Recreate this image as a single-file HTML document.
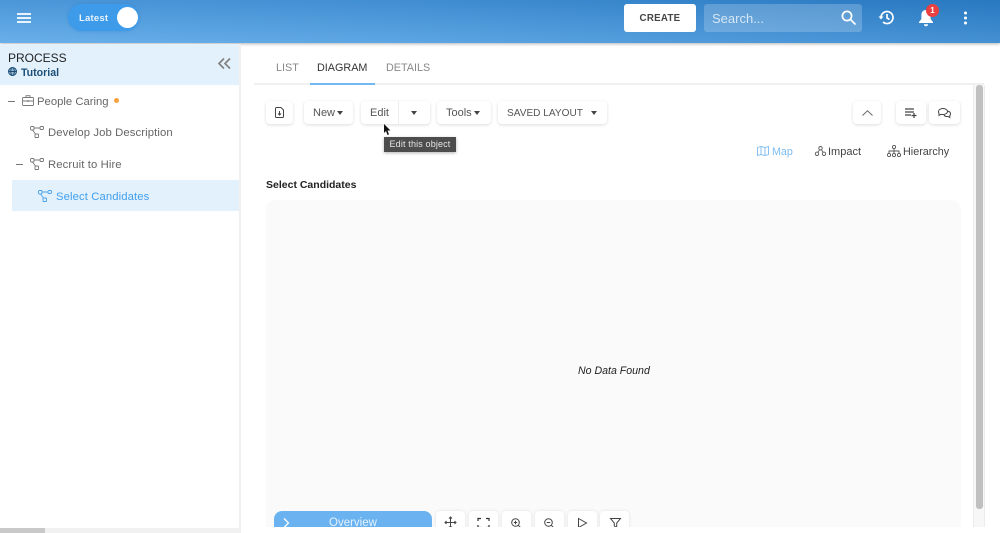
<!DOCTYPE html>
<html><head><meta charset="utf-8"><style>
*{box-sizing:border-box}
html,body{margin:0;padding:0;width:1000px;height:533px;overflow:hidden;background:#fff;font-family:"Liberation Sans",sans-serif}
.a{position:absolute;white-space:nowrap}
.btn{position:absolute;top:101px;height:23px;background:#fff;border-radius:4px;box-shadow:0 1px 3px rgba(0,0,0,.14);font-size:11px;color:#555;line-height:25px;white-space:nowrap}
.bb{position:absolute;top:511px;width:29px;height:22px;background:#fff;border-radius:4px 4px 0 0;box-shadow:0 0 3px rgba(0,0,0,.1)}
.car{position:absolute;width:0;height:0;border-left:3.5px solid transparent;border-right:3.5px solid transparent;border-top:4px solid #444}
svg{position:absolute;overflow:visible}
.t{font-size:11.3px;color:#666;letter-spacing:.1px}
.tab{font-size:10.8px;top:62px}
</style></head><body>
<!-- header -->
<div class="a" style="left:0;top:0;width:1000px;height:43px;background:linear-gradient(to right,#58a7e8 0%,#4b9ce0 40%,#2f84cd 100%);box-shadow:0 1px 3px rgba(0,0,0,.3)"></div>
<div class="a" style="left:0;top:0;width:1000px;height:43px;background:linear-gradient(to bottom,rgba(0,50,120,.14) 0%,rgba(255,255,255,.1) 100%)"></div>
<svg style="left:17px;top:13px" width="14" height="10"><path d="M0 1h14M0 5h14M0 9h14" stroke="#fff" stroke-width="1.800"/></svg>
<div class="a" style="left:68px;top:4px;width:71px;height:27px;border-radius:14px;background:#3d9bea;box-shadow:0 0 3px rgba(40,120,200,.4)"></div>
<div class="a" style="left:79px;top:13px;font-size:9.5px;font-weight:bold;color:#e8f3fc;letter-spacing:.2px">Latest</div>
<div class="a" style="left:117px;top:7px;width:21px;height:21px;border-radius:50%;background:#fff"></div>
<div class="a" style="left:624px;top:4px;width:72px;height:28px;background:#fff;border-radius:3px;text-align:center;font-size:9.7px;font-weight:bold;line-height:29px;color:#444;letter-spacing:.3px">CREATE</div>
<div class="a" style="left:704px;top:4px;width:158px;height:28px;background:rgba(255,255,255,.2);border-radius:3px;font-size:13px;line-height:29px;color:#d5e6f5;padding-left:8px">Search...</div>
<svg style="left:841px;top:10px" width="16" height="16" fill="none" stroke="#fff" stroke-width="1.7"><circle cx="6" cy="6" r="4.6"/><path d="M9.5 9.500L14.500 14.500"/></svg>
<svg style="left:878px;top:9px" width="17" height="17" fill="none" stroke="#fff" stroke-width="1.7"><path d="M3 8.500A6 6 0 1 1 5 13"/><path d="M0.500 7.500h5L3 10.500z" fill="#fff" stroke="none"/><path d="M9 5v4l2.500 1.500"/></svg>
<svg style="left:917px;top:9px" width="18" height="18"><path d="M9 1c-3 0-4.600 2.200-4.600 5v4L2 13v1h14v-1l-2.400-3V6c0-2.800-1.600-5-4.600-5z" fill="#fff"/><path d="M7 15.200h4a2 2 0 0 1-4 0z" fill="#fff"/></svg>
<div class="a" style="left:926px;top:4px;width:13px;height:13px;border-radius:50%;background:#ea4040;color:#fff;font-size:8px;font-weight:bold;text-align:center;line-height:13px">1</div>
<svg style="left:963px;top:11px" width="5" height="14" fill="#fff"><circle cx="2.500" cy="2" r="1.500"/><circle cx="2.500" cy="7" r="1.500"/><circle cx="2.500" cy="12" r="1.500"/></svg>

<!-- sidebar -->
<div class="a" style="left:0;top:44px;width:239px;height:41px;background:#e3f1fc"></div>
<div class="a" style="left:239px;top:44px;width:2px;height:489px;background:#f0f0f0"></div>
<div class="a" style="left:8px;top:51px;font-size:12px;color:#222">PROCESS</div>
<svg style="left:8px;top:67px" width="9" height="9" fill="none" stroke="#1d4f79" stroke-width="1"><circle cx="4.500" cy="4.500" r="4" fill="#1d4f79" fill-opacity=".35"/><ellipse cx="4.500" cy="4.500" rx="1.800" ry="4"/><path d="M.5 4.500h8"/></svg>
<div class="a" style="left:21px;top:67px;font-size:10.600px;font-weight:bold;color:#1d4f79">Tutorial</div>
<svg style="left:218px;top:58px" width="13" height="11" fill="none" stroke="#808080" stroke-width="1.700"><path d="M6 .5L1 5.500 6 10.500M12 .5L7 5.500 12 10.500"/></svg>

<svg style="left:8px;top:100.500px" width="7" height="2"><path d="M0 .5h7" stroke="#777"/></svg>
<svg style="left:22px;top:95px" width="12" height="11" fill="none" stroke="#777" stroke-width=".9"><rect x=".5" y="2.500" width="11" height="8" rx="1"/><path d="M4 2.500V.7h4v1.800M.5 6h11M6 5v2"/></svg>
<div class="a t" style="left:37px;top:96px;letter-spacing:0">People Caring</div>
<div class="a" style="left:114px;top:98px;width:5px;height:5px;border-radius:50%;background:#f9a03f"></div>

<svg style="left:30px;top:126px" width="14" height="12" fill="none" stroke="#777" stroke-width=".9"><rect x=".5" y=".5" width="3.500" height="3.500" rx="1"/><rect x="10" y=".5" width="3.500" height="3" rx="1"/><rect x="5" y="8" width="3.500" height="3.500" rx=".5"/><path d="M4 2h6M2.500 4l3 4"/></svg>
<div class="a t" style="left:48px;top:127px">Develop Job Description</div>

<svg style="left:16px;top:163.500px" width="7" height="2"><path d="M0 .5h7" stroke="#777"/></svg>
<svg style="left:30px;top:158px" width="14" height="12" fill="none" stroke="#777" stroke-width=".9"><rect x=".5" y=".5" width="3.500" height="3.500" rx="1"/><rect x="10" y=".5" width="3.500" height="3" rx="1"/><rect x="5" y="8" width="3.500" height="3.500" rx=".5"/><path d="M4 2h6M2.500 4l3 4"/></svg>
<div class="a t" style="left:48px;top:159px">Recruit to Hire</div>

<div class="a" style="left:12px;top:180px;width:227px;height:31px;background:#e3f1fc"></div>
<svg style="left:38px;top:190px" width="14" height="12" fill="none" stroke="#4aa3ea" stroke-width=".9"><rect x=".5" y=".5" width="3.500" height="3.500" rx="1"/><rect x="10" y=".5" width="3.500" height="3" rx="1"/><rect x="5" y="8" width="3.500" height="3.500" rx=".5"/><path d="M4 2h6M2.500 4l3 4"/></svg>
<div class="a t" style="left:56px;top:191px;color:#42a0ee">Select Candidates</div>

<!-- tabs -->
<div class="a tab" style="left:276px;color:#888">LIST</div>
<div class="a tab" style="left:317px;color:#333">DIAGRAM</div>
<div class="a tab" style="left:386px;color:#888">DETAILS</div>
<div class="a" style="left:254px;top:83px;width:730px;height:2px;background:#f0f0f0"></div>
<div class="a" style="left:310px;top:83px;width:65px;height:2px;background:#72b8f3"></div>

<!-- toolbar -->
<div class="btn" style="left:266px;width:27px"></div>
<svg style="left:275px;top:107px" width="9" height="11" fill="none" stroke="#444" stroke-width="1"><path d="M.5 1.500a1 1 0 0 1 1-1H6L8.500 3v6.500a1 1 0 0 1-1 1h-6a1 1 0 0 1-1-1z"/><path d="M4.500 4v4M3 6.500l1.500 1.500 1.500-1.500"/></svg>
<div class="btn" style="left:304px;width:49px;padding-left:9px">New</div><div class="car" style="left:337px;top:111px"></div>
<div class="btn" style="left:361px;width:69px;padding-left:9px">Edit</div><div class="a" style="left:398px;top:101px;width:1px;height:23px;background:#eee"></div><div class="car" style="left:411px;top:111px"></div>
<div class="btn" style="left:437px;width:54px;padding-left:9px">Tools</div><div class="car" style="left:474px;top:111px"></div>
<div class="btn" style="left:498px;width:109px;padding-left:9px;font-size:10.100px">SAVED LAYOUT</div><div class="car" style="left:591px;top:111px"></div>
<svg style="left:383px;top:124px" width="8" height="12"><path d="M1 0v9l2-2 1.500 4 1.500-.6L4.500 6.500H7.500z" fill="#111"/></svg>
<div class="a" style="left:384px;top:137px;width:72px;height:15px;background:#4d4d4d;font-size:9px;color:#e6e6e6;line-height:15px;text-align:center;box-shadow:0 1px 3px rgba(0,0,0,.3);letter-spacing:.15px">Edit this object</div>

<div class="btn" style="left:853px;width:28px"></div>
<svg style="left:862px;top:110px" width="11" height="6" fill="none" stroke="#666"><path d="M.5 5.500L5.500 .8l5 4.700"/></svg>
<div class="btn" style="left:896px;width:30px"></div>
<svg style="left:905px;top:108px" width="13" height="10" fill="none" stroke="#444" stroke-width="1.200"><path d="M0 1h9M0 4h9M0 7h6M9 5v5M6.500 7.500h5"/></svg>
<div class="btn" style="left:929px;width:31px"></div>
<svg style="left:938px;top:108px" width="13" height="10" fill="none" stroke="#444" stroke-width="1"><path d="M5 .5c2.500 0 4.500 1.300 4.500 3S7.500 6.500 5 6.500H2.500L1 7.500V5.500C.5 5 .5 4 .5 3.500.5 1.800 2.500.5 5 .5z"/><path d="M9.500 3c1.500.3 3 1.300 3 2.800 0 .7-.3 1.200-.7 1.700V9.500L10 8.500H8.500c-1 0-2-.5-2.500-1.500"/></svg>

<svg style="left:757px;top:146px" width="12" height="10" fill="none" stroke="#7cbcf2" stroke-width=".9"><path d="M.5 1.500L4 .5l4 1 3.500-1v8l-3.500 1-4-1-3.500 1zM4 .5v8M8 1.500v8"/></svg>
<div class="a" style="left:772px;top:145.500px;font-size:10.700px;color:#7cbcf2">Map</div>
<svg style="left:815px;top:146px" width="11" height="10" fill="none" stroke="#555" stroke-width=".9"><circle cx="5.500" cy="2.200" r="1.700"/><circle cx="2" cy="7.800" r="1.700"/><circle cx="9" cy="7.800" r="1.700"/><path d="M4.500 3.700L3 6.300M6.500 3.700L8 6.300"/></svg>
<div class="a" style="left:828px;top:145.500px;font-size:11px;color:#444">Impact</div>
<svg style="left:887px;top:145px" width="14" height="12" fill="none" stroke="#555" stroke-width=".9"><circle cx="7" cy="2" r="1.600"/><circle cx="2" cy="10" r="1.600"/><circle cx="7" cy="10" r="1.600"/><circle cx="12" cy="10" r="1.600"/><path d="M7 3.600v4.800M2 8.400V6h10v2.400"/></svg>
<div class="a" style="left:903px;top:145.500px;font-size:10.800px;color:#444">Hierarchy</div>

<div class="a" style="left:266px;top:179px;font-size:10.500px;font-weight:bold;color:#222">Select Candidates</div>
<div class="a" style="left:266px;top:200px;width:695px;height:333px;background:#fafafa;border-radius:9px 9px 0 0"></div>
<div class="a" style="left:578px;top:365px;font-size:10.600px;font-style:italic;color:#222">No Data Found</div>

<!-- bottom controls -->
<div class="a" style="left:274px;top:511px;width:158px;height:22px;background:#6ab3f0;border-radius:8px 8px 0 0;overflow:hidden"><div style="position:absolute;left:55px;top:5.500px;font-size:11.500px;color:#e4f2fd">Overview</div></div>
<svg style="left:283px;top:518px" width="7" height="10" fill="none" stroke="#fff" stroke-width="1.300"><path d="M1 .5L5.500 5 1 9.500"/></svg>
<div class="bb" style="left:436px"></div><div class="bb" style="left:469px"></div><div class="bb" style="left:502px"></div><div class="bb" style="left:535px"></div><div class="bb" style="left:568px"></div><div class="bb" style="left:600px"></div>
<svg style="left:445px;top:517px" width="11" height="11" fill="none" stroke="#444" stroke-width="1"><path d="M5.500 0v11M0 5.500h11M4 1.500L5.500 0 7 1.500M4 9.500L5.500 11 7 9.500M1.500 4L0 5.500 1.500 7M9.500 4L11 5.500 9.500 7"/></svg>
<svg style="left:478px;top:518px" width="11" height="10" fill="none" stroke="#333" stroke-width="1.200"><path d="M0 3V.5h3M8 .5h3V3M0 7v2.500h3M8 9.500h3V7"/></svg>
<svg style="left:511px;top:518px" width="11" height="10" fill="none" stroke="#444" stroke-width="1"><circle cx="4.500" cy="4.500" r="3.800"/><path d="M7.300 7.300L10 10M2.800 4.500h3.400M4.500 2.800v3.400"/></svg>
<svg style="left:544px;top:518px" width="11" height="10" fill="none" stroke="#444" stroke-width="1"><circle cx="4.500" cy="4.500" r="3.800"/><path d="M7.300 7.300L10 10M2.800 4.500h3.400"/></svg>
<svg style="left:578px;top:518px" width="9" height="10" fill="none" stroke="#444" stroke-width="1"><path d="M.5.5L8.500 5 .5 9.500z"/></svg>
<svg style="left:610px;top:518px" width="11" height="10" fill="none" stroke="#444" stroke-width="1"><path d="M.5.5h10L6.700 5v4.500L4.300 8V5z"/></svg>

<!-- right scrollbar -->
<div class="a" style="left:973px;top:85px;width:12px;height:448px;background:#f7f7f7;border-left:1px solid #ececec;border-right:1px solid #ececec"></div>
<div class="a" style="left:976px;top:85px;width:7px;height:424px;background:#c0c0c0;border-radius:3px"></div>

<!-- clip strip at bottom -->
<div class="a" style="left:241px;top:527px;width:759px;height:6px;background:#fff"></div>
<div class="a" style="left:0;top:528px;width:241px;height:5px;background:#f1f1f1"></div>
<div class="a" style="left:0;top:528px;width:45px;height:5px;background:#c9c9c9"></div>
</body></html>
